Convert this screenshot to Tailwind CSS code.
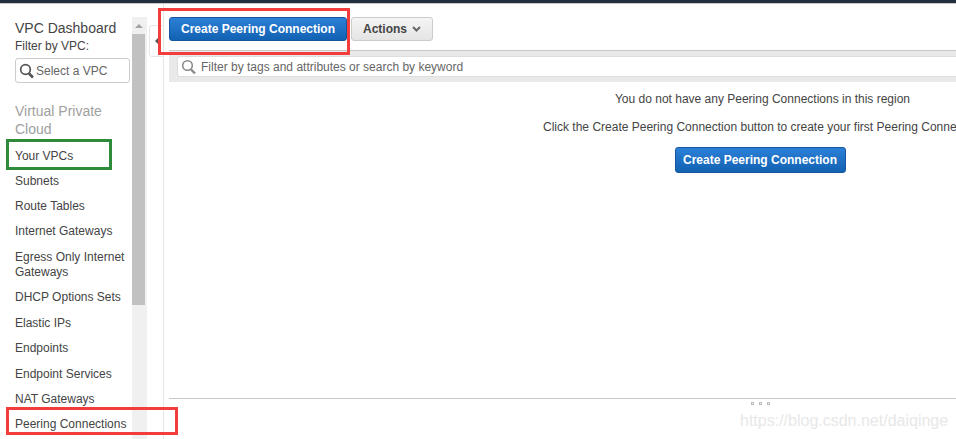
<!DOCTYPE html>
<html lang="en">
<head>
<meta charset="UTF-8">
<title>Peering Connections</title>
<script src="https://cdn.jsdelivr.net/npm/@tailwindcss/browser@4"></script>
</head>
<body class="bg-white overflow-hidden font-['Liberation_Sans',Arial,sans-serif]">
<div class="relative w-[956px] h-[439px] overflow-hidden">
  <div class="h-[4px] bg-[#232f3e] border-b border-[#c8c8c8]"></div>
  <div class="flex h-[435px]">
    <!-- left nav -->
    <div class="w-[132px] shrink-0 pl-[15px] pt-[16px] text-[#444]">
      <div class="text-[14px] leading-[17px] text-[#444]">VPC Dashboard</div>
      <div class="text-[12px] leading-[15px] mt-[2px] text-[#444]">Filter by VPC:</div>
      <div class="mt-[4px] w-[115px] h-[25px] border border-[#ccc] rounded-[3px] flex items-center pl-[3px] gap-[2px] text-[12px] text-[#666]">
        <svg width="15" height="16" viewBox="0 0 15 16" fill="none" stroke="#555" stroke-width="1.7"><circle cx="6.5" cy="6.5" r="4.8"/><path d="M10 10.5l4 4" stroke-width="2.6"/></svg>
        <span>Select a VPC</span>
      </div>
      <div class="mt-[19px] text-[14px] leading-[18px] text-[#a0a0a0]">Virtual Private<br>Cloud</div>
      <ul class="mt-[11px] text-[12px] leading-[15px] text-[#444] w-[114px]">
        <li class="h-[25px]">Your VPCs</li>
        <li class="h-[25px]">Subnets</li>
        <li class="h-[25px]">Route Tables</li>
        <li class="h-[26px]">Internet Gateways</li>
        <li class="h-[40px]">Egress Only Internet Gateways</li>
        <li class="h-[26px]">DHCP Options Sets</li>
        <li class="h-[25px]">Elastic IPs</li>
        <li class="h-[26px]">Endpoints</li>
        <li class="h-[25px]">Endpoint Services</li>
        <li class="h-[25px]">NAT Gateways</li>
        <li class="whitespace-nowrap">Peering Connections</li>
      </ul>
    </div>
    <!-- scrollbar -->
    <div class="w-[15px] shrink-0 mt-[13px] bg-[#f0f0f0] flex flex-col items-start">
      <div class="w-[14px] h-[17px] flex items-center justify-center">
        <div class="w-0 h-0 border-x-[4px] border-x-transparent border-b-[4px] border-b-[#a3a3a3]"></div>
      </div>
      <div class="w-[13px] h-[271px] bg-[#c1c1c1]"></div>
    </div>
    <!-- collapse gutter -->
    <div class="relative w-[17px] shrink-0 border-r border-[#e6e6e6]">
      <div class="absolute left-[2px] top-[21px] w-[15px] h-[32px] bg-white border border-[#e6e6e6] rounded-l-[3px] flex items-center pl-[5px]">
        <div class="w-0 h-0 border-y-[4px] border-y-transparent border-r-[4px] border-r-[#555]"></div>
      </div>
    </div>
    <!-- main -->
    <div class="flex-1 min-w-0 pl-[5px] flex flex-col">
      <div class="h-[46px] flex items-start pt-[13px] gap-[4px]">
        <button class="h-[24px] w-[178px] rounded-[3px] border border-[#15569f] bg-gradient-to-b from-[#2b80d6] to-[#1262b3] text-white text-[12px] font-bold">Create Peering Connection</button>
        <button class="h-[24px] w-[82px] rounded-[3px] border border-[#ccc] bg-gradient-to-b from-[#f5f5f5] to-[#e4e4e4] text-[#444] text-[12px] font-bold flex items-center justify-center gap-[5px]">Actions
          <svg width="9" height="6" viewBox="0 0 9 6" fill="none" stroke="#666" stroke-width="2"><path d="M1 1l3.5 3.5L8 1"/></svg>
        </button>
      </div>
      <div class="h-[32px] bg-[#e9e9e9] border-t border-[#c8c8c8] pt-[5px] pl-[8px] overflow-hidden">
        <div class="h-[21px] w-[800px] bg-white border border-[#ddd] rounded-l-[3px] flex items-center pl-[3px] gap-[5px] text-[12px] text-[#666]">
          <svg width="15" height="16" viewBox="0 0 15 16" fill="none" stroke="#8a8a8a" stroke-width="1.6"><circle cx="6.5" cy="6.5" r="4.8"/><path d="M10 10.5l4 4" stroke-width="2.4"/></svg>
          <span>Filter by tags and attributes or search by keyword</span>
        </div>
      </div>
      <div class="h-[316px] text-[12px] text-[#444] relative">
        <div class="w-[1187px] flex flex-col items-center pt-[10px]">
          <p class="leading-[15px]">You do not have any Peering Connections in this region</p>
          <p class="leading-[15px] mt-[13px] whitespace-nowrap">Click the Create Peering Connection button to create your first Peering Connection</p>
          <button class="mt-[12px] mr-[5px] h-[26px] w-[171px] rounded-[3px] border border-[#15569f] bg-gradient-to-b from-[#2b80d6] to-[#1262b3] text-white text-[12px] font-bold">Create Peering Connection</button>
        </div>
      </div>
      <div class="relative border-t border-[#c8c8c8] flex-1">
        <div class="absolute left-[582px] top-[3px] flex gap-[5px]">
          <div class="w-[3px] h-[3px] border border-[#bbb]"></div>
          <div class="w-[3px] h-[3px] border border-[#bbb]"></div>
          <div class="w-[3px] h-[3px] border border-[#bbb]"></div>
        </div>
      </div>
    </div>
  </div>
  <!-- annotation boxes drawn over the screenshot -->
  <div class="absolute left-[158px] top-[8px] w-[192px] h-[47px] border-[3px] border-[#f33c3c]"></div>
  <div class="absolute left-[6px] top-[139px] w-[106px] h-[31px] border-[3px] border-[#2e8b3a]"></div>
  <div class="absolute left-[6px] top-[407px] w-[172px] h-[28px] border-[3px] border-[#f33c3c]"></div>
  <div class="absolute left-[740px] top-[412px] text-[16px] leading-[18px] text-[#e8e8e8] whitespace-nowrap">https://blog.csdn.net/daiqinge</div>
</div>
</body>
</html>
